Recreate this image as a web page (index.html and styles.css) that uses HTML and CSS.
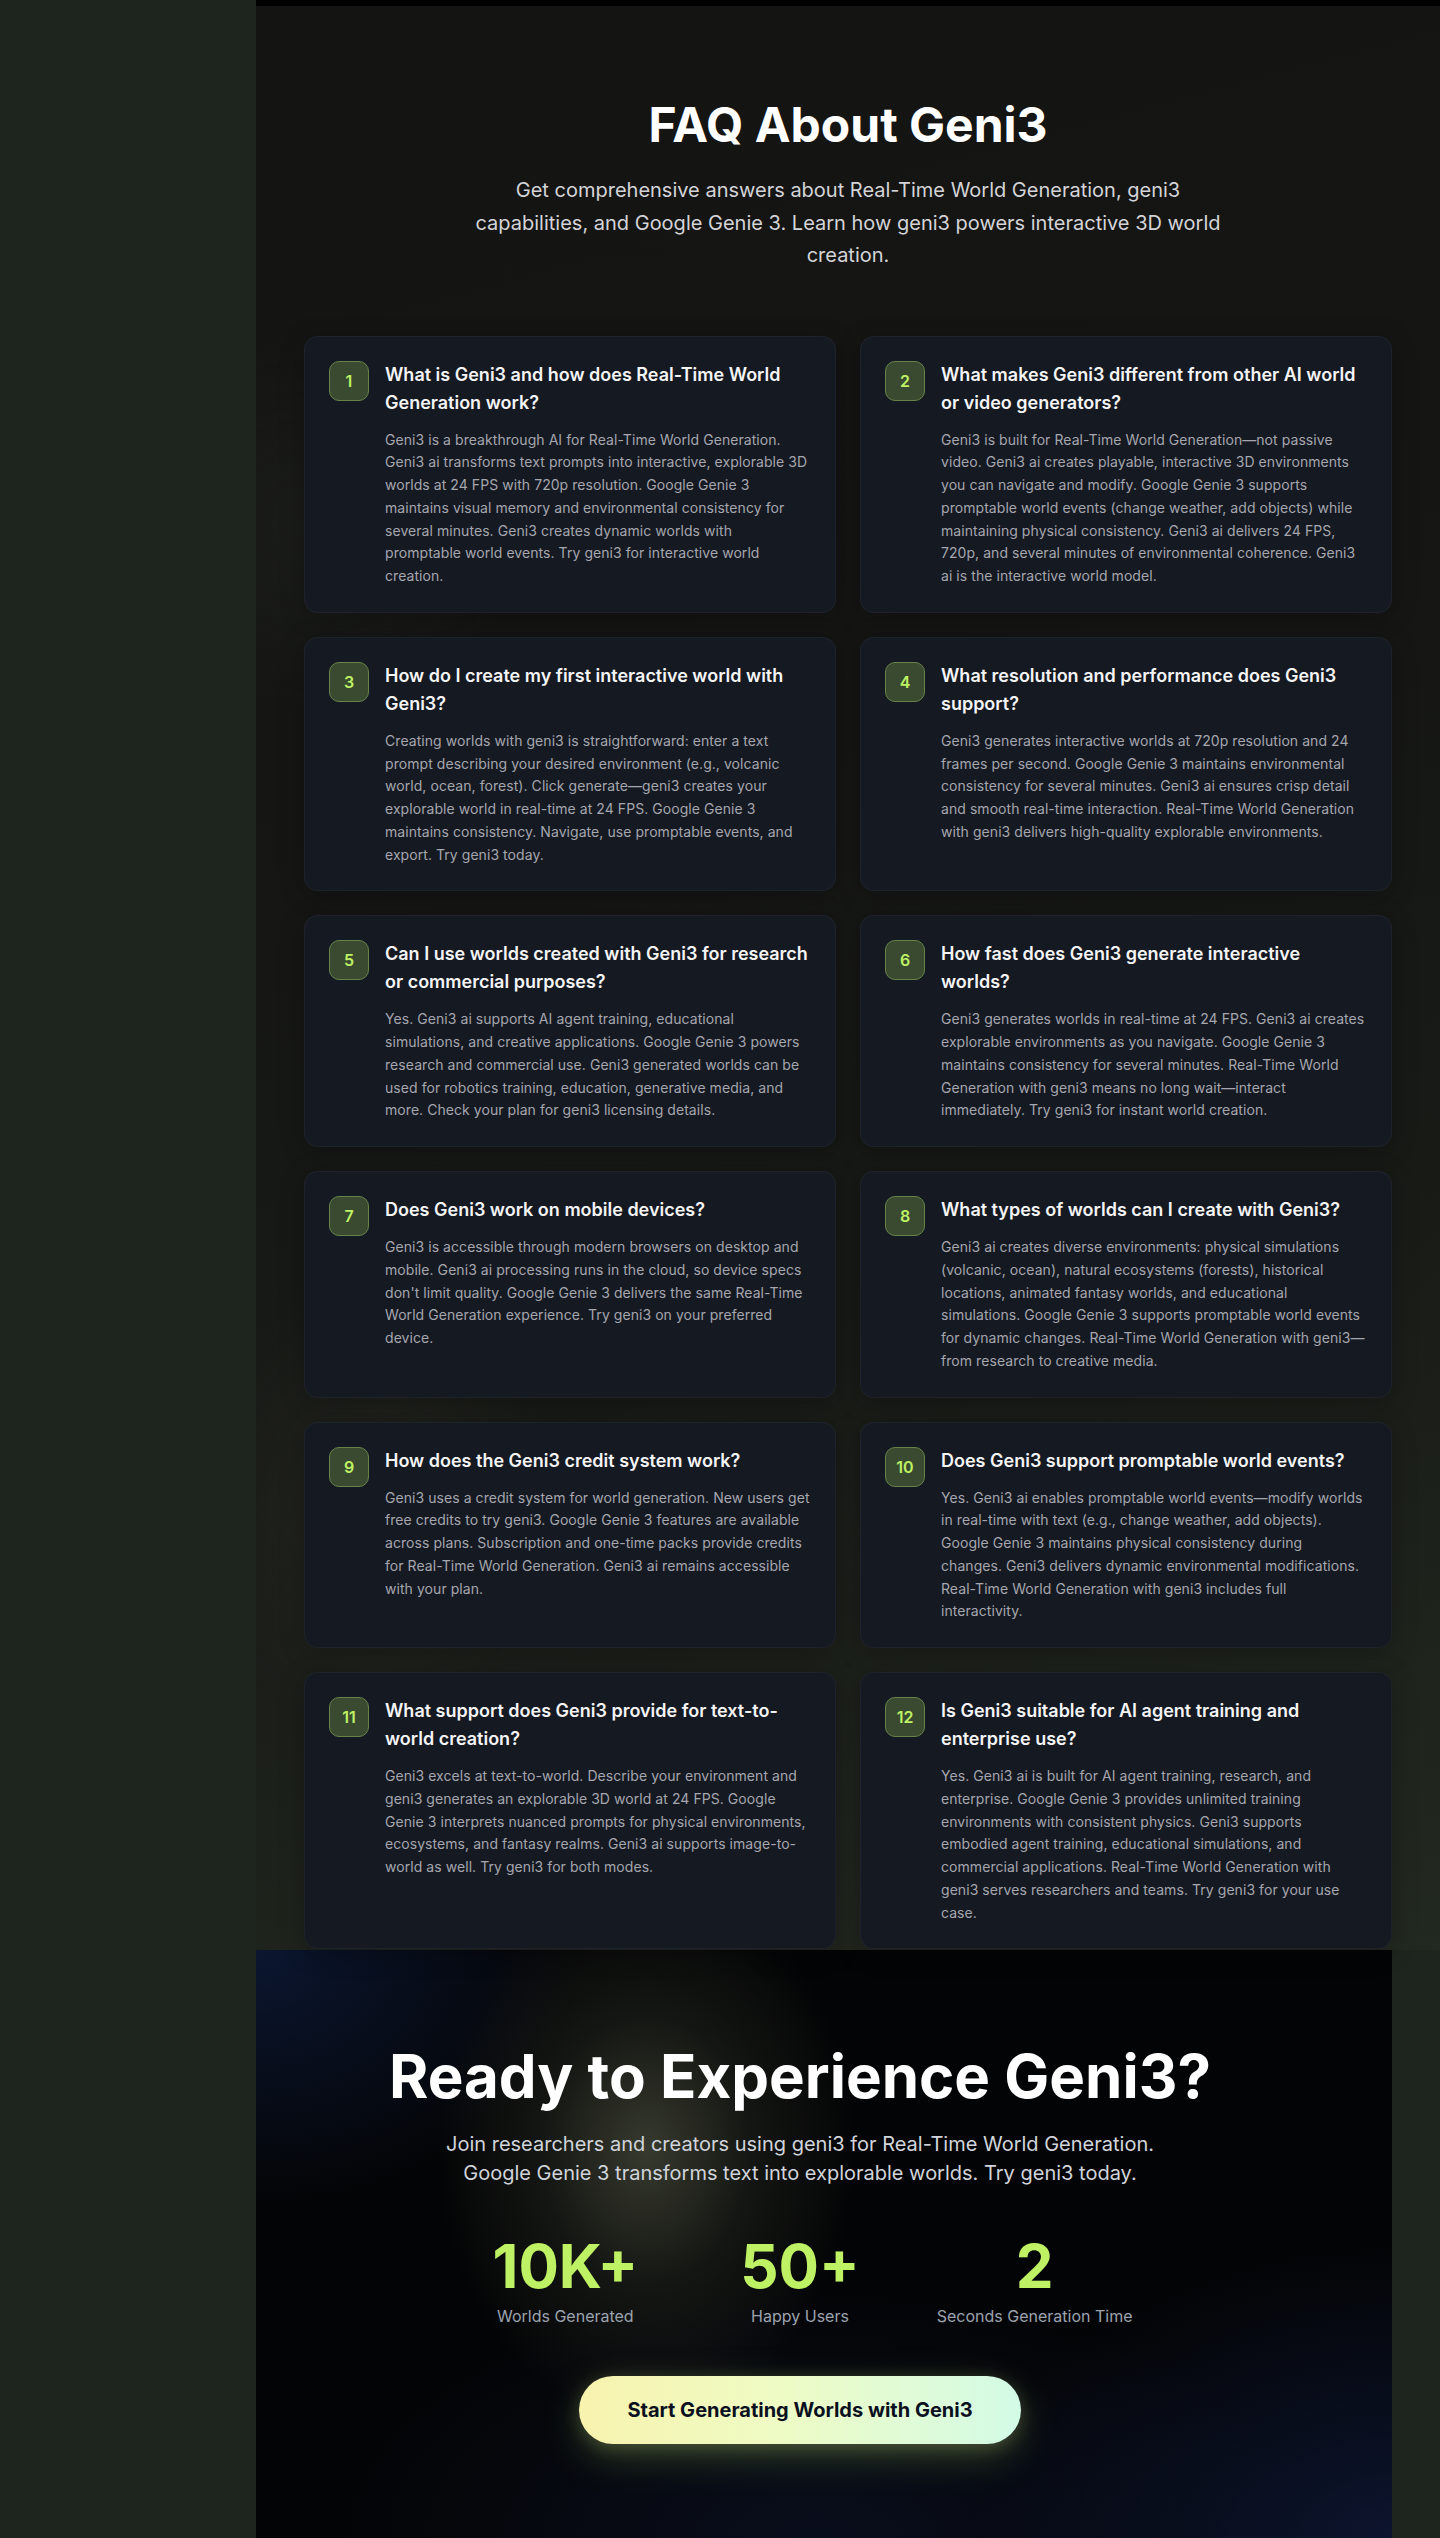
FILE: index.html
```html
<!DOCTYPE html>
<html lang="en">
<head>
<meta charset="utf-8">
<title>FAQ About Geni3</title>
<link rel="stylesheet" href="styles.css">
</head>
<body>
<div class="page">
  <section class="faq">
    <div class="faq-inner">
      <header class="faq-head">
        <h1 class="faq-title">FAQ About Geni3</h1>
        <p class="faq-sub">Get comprehensive answers about Real-Time World Generation, geni3 capabilities, and Google Genie 3. Learn how geni3 powers interactive 3D world creation.</p>
      </header>
      <div class="faq-grid">
        <article class="card">
          <div class="badge">1</div>
          <div class="card-body">
            <h3 class="q">What is Geni3 and how does Real-Time World Generation work?</h3>
            <p class="a">Geni3 is a breakthrough AI for Real-Time World Generation. Geni3 ai transforms text prompts into interactive, explorable 3D worlds at 24 FPS with 720p resolution. Google Genie 3 maintains visual memory and environmental consistency for several minutes. Geni3 creates dynamic worlds with promptable world events. Try geni3 for interactive world creation.</p>
          </div>
        </article>
        <article class="card">
          <div class="badge">2</div>
          <div class="card-body">
            <h3 class="q">What makes Geni3 different from other AI world or video generators?</h3>
            <p class="a">Geni3 is built for Real-Time World Generation—not passive video. Geni3 ai creates playable, interactive 3D environments you can navigate and modify. Google Genie 3 supports promptable world events (change weather, add objects) while maintaining physical consistency. Geni3 ai delivers 24 FPS, 720p, and several minutes of environmental coherence. Geni3 ai is the interactive world model.</p>
          </div>
        </article>
        <article class="card">
          <div class="badge">3</div>
          <div class="card-body">
            <h3 class="q">How do I create my first interactive world with Geni3?</h3>
            <p class="a">Creating worlds with geni3 is straightforward: enter a text prompt describing your desired environment (e.g., volcanic world, ocean, forest). Click generate—geni3 creates your explorable world in real-time at 24 FPS. Google Genie 3 maintains consistency. Navigate, use promptable events, and export. Try geni3 today.</p>
          </div>
        </article>
        <article class="card">
          <div class="badge">4</div>
          <div class="card-body">
            <h3 class="q">What resolution and performance does Geni3 support?</h3>
            <p class="a">Geni3 generates interactive worlds at 720p resolution and 24 frames per second. Google Genie 3 maintains environmental consistency for several minutes. Geni3 ai ensures crisp detail and smooth real-time interaction. Real-Time World Generation with geni3 delivers high-quality explorable environments.</p>
          </div>
        </article>
        <article class="card">
          <div class="badge">5</div>
          <div class="card-body">
            <h3 class="q">Can I use worlds created with Geni3 for research or commercial purposes?</h3>
            <p class="a">Yes. Geni3 ai supports AI agent training, educational simulations, and creative applications. Google Genie 3 powers research and commercial use. Geni3 generated worlds can be used for robotics training, education, generative media, and more. Check your plan for geni3 licensing details.</p>
          </div>
        </article>
        <article class="card">
          <div class="badge">6</div>
          <div class="card-body">
            <h3 class="q">How fast does Geni3 generate interactive worlds?</h3>
            <p class="a">Geni3 generates worlds in real-time at 24 FPS. Geni3 ai creates explorable environments as you navigate. Google Genie 3 maintains consistency for several minutes. Real-Time World Generation with geni3 means no long wait—interact immediately. Try geni3 for instant world creation.</p>
          </div>
        </article>
        <article class="card">
          <div class="badge">7</div>
          <div class="card-body">
            <h3 class="q">Does Geni3 work on mobile devices?</h3>
            <p class="a">Geni3 is accessible through modern browsers on desktop and mobile. Geni3 ai processing runs in the cloud, so device specs don't limit quality. Google Genie 3 delivers the same Real-Time World Generation experience. Try geni3 on your preferred device.</p>
          </div>
        </article>
        <article class="card">
          <div class="badge">8</div>
          <div class="card-body">
            <h3 class="q">What types of worlds can I create with Geni3?</h3>
            <p class="a">Geni3 ai creates diverse environments: physical simulations (volcanic, ocean), natural ecosystems (forests), historical locations, animated fantasy worlds, and educational simulations. Google Genie 3 supports promptable world events for dynamic changes. Real-Time World Generation with geni3—from research to creative media.</p>
          </div>
        </article>
        <article class="card">
          <div class="badge">9</div>
          <div class="card-body">
            <h3 class="q">How does the Geni3 credit system work?</h3>
            <p class="a">Geni3 uses a credit system for world generation. New users get free credits to try geni3. Google Genie 3 features are available across plans. Subscription and one-time packs provide credits for Real-Time World Generation. Geni3 ai remains accessible with your plan.</p>
          </div>
        </article>
        <article class="card">
          <div class="badge">10</div>
          <div class="card-body">
            <h3 class="q">Does Geni3 support promptable world events?</h3>
            <p class="a">Yes. Geni3 ai enables promptable world events—modify worlds in real-time with text (e.g., change weather, add objects). Google Genie 3 maintains physical consistency during changes. Geni3 delivers dynamic environmental modifications. Real-Time World Generation with geni3 includes full interactivity.</p>
          </div>
        </article>
        <article class="card">
          <div class="badge">11</div>
          <div class="card-body">
            <h3 class="q">What support does Geni3 provide for text-to-world creation?</h3>
            <p class="a">Geni3 excels at text-to-world. Describe your environment and geni3 generates an explorable 3D world at 24 FPS. Google Genie 3 interprets nuanced prompts for physical environments, ecosystems, and fantasy realms. Geni3 ai supports image-to-world as well. Try geni3 for both modes.</p>
          </div>
        </article>
        <article class="card">
          <div class="badge">12</div>
          <div class="card-body">
            <h3 class="q">Is Geni3 suitable for AI agent training and enterprise use?</h3>
            <p class="a">Yes. Geni3 ai is built for AI agent training, research, and enterprise. Google Genie 3 provides unlimited training environments with consistent physics. Geni3 supports embodied agent training, educational simulations, and commercial applications. Real-Time World Generation with geni3 serves researchers and teams. Try geni3 for your use case.</p>
          </div>
        </article>
      </div>
    </div>
  </section>

  <section class="cta">
    <div class="cta-inner">
      <h2 class="cta-title">Ready to Experience Geni3?</h2>
      <p class="cta-sub">Join researchers and creators using geni3 for Real-Time World Generation. Google Genie 3 transforms text into explorable worlds. Try geni3 today.</p>
      <div class="stats">
        <div class="stat">
          <div class="stat-num">10K+</div>
          <div class="stat-label">Worlds Generated</div>
        </div>
        <div class="stat">
          <div class="stat-num">50+</div>
          <div class="stat-label">Happy Users</div>
        </div>
        <div class="stat">
          <div class="stat-num">2</div>
          <div class="stat-label">Seconds Generation Time</div>
        </div>
      </div>
      <a class="cta-btn" href="#">Start Generating Worlds with Geni3</a>
    </div>
  </section>
</div>
</body>
</html>
```

FILE: styles.css
```css
* {
  box-sizing: border-box;
  margin: 0;
  padding: 0;
}

html,
body {
  background: #1e241e;
}

body {
  font-family: Inter, "Noto Sans", "Liberation Sans", sans-serif;
  color: #ffffff;
  min-height: 2538px;
  -webkit-font-smoothing: antialiased;
}

.page {
  margin-left: 256px;
}

/* ---------- FAQ ---------- */
.faq {
  width: 1184px;
  border-top: 6px solid #000000;
  padding: 90px 0 1px;
  background:
    radial-gradient(ellipse 260px 320px at 120px 1500px, rgba(60, 58, 48, 0.3), rgba(60, 58, 48, 0) 70%),
    radial-gradient(ellipse 300px 260px at 60px 520px, rgba(40, 44, 36, 0.3), rgba(40, 44, 36, 0) 70%),
    linear-gradient(165deg, #141413 0%, #151614 35%, #181a16 65%, #222920 100%);
}

.faq-inner {
  width: 1088px;
  margin: 0 auto;
}

.faq-head {
  display: flex;
  flex-direction: column;
  align-items: center;
  text-align: center;
  margin-bottom: 64px;
}

.faq-title {
  font-size: 48px;
  line-height: 58px;
  font-weight: 700;
  color: #ffffff;
}

.faq-sub {
  margin-top: 20px;
  max-width: 768px;
  font-size: 20px;
  line-height: 32.5px;
  color: #d4d4d8;
}

.faq-grid {
  display: grid;
  grid-template-columns: 1fr 1fr;
  gap: 24px;
}

.card {
  display: flex;
  gap: 16px;
  padding: 24px;
  background: #141922;
  border: 1px solid rgba(255, 255, 255, 0.045);
  border-radius: 14px;
  box-shadow: 0 4px 24px rgba(0, 0, 0, 0.25);
}

.badge {
  flex: none;
  width: 40px;
  height: 40px;
  border-radius: 10px;
  background: #3a4a30;
  border: 1px solid #66834a;
  color: #bef264;
  font-size: 16px;
  font-weight: 600;
  display: flex;
  align-items: center;
  justify-content: center;
}

.card-body {
  flex: 1;
  min-width: 0;
}

.q {
  font-size: 18px;
  line-height: 28px;
  font-weight: 600;
  color: #f4f4f5;
  margin-bottom: 12px;
}

.a {
  font-size: 14px;
  line-height: 22.75px;
  letter-spacing: 0.06px;
  color: #a6a6ae;
}

/* ---------- CTA ---------- */
.cta {
  width: 1136px;
  padding: 96px 0;
  background:
    radial-gradient(ellipse 210px 270px at 390px 200px, rgba(98, 102, 80, 0.55), rgba(72, 76, 60, 0.25) 50%, rgba(40, 42, 34, 0) 100%),
    radial-gradient(ellipse 320px 260px at 0px 0px, rgba(14, 28, 62, 0.75), rgba(14, 28, 62, 0) 100%),
    radial-gradient(ellipse 420px 300px at 1136px 589px, rgba(16, 26, 60, 0.75), rgba(16, 26, 60, 0) 100%),
    radial-gradient(ellipse 500px 260px at 560px 589px, rgba(12, 18, 38, 0.7), rgba(12, 18, 38, 0) 100%),
    #030405;
}

.cta-inner {
  width: 1088px;
  display: flex;
  flex-direction: column;
  align-items: center;
  text-align: center;
}

.cta-title {
  font-size: 60px;
  line-height: 60px;
  font-weight: 700;
  color: #ffffff;
  margin-bottom: 24px;
}

.cta-sub {
  max-width: 768px;
  font-size: 20px;
  line-height: 29px;
  color: #d1d5db;
  margin-bottom: 48px;
}

.stats {
  width: 672px;
  display: grid;
  grid-template-columns: repeat(3, 1fr);
  gap: 32px;
  margin-bottom: 48px;
}

.stat-num {
  font-size: 60px;
  line-height: 60px;
  font-weight: 700;
  color: #bef264;
}

.stat-label {
  margin-top: 8px;
  font-size: 16px;
  line-height: 24px;
  color: #9ca3af;
}

.cta-btn {
  display: inline-block;
  padding: 20px 48px;
  border-radius: 9999px;
  font-size: 20px;
  line-height: 28px;
  font-weight: 700;
  color: #0b1020;
  text-decoration: none;
  background: linear-gradient(90deg, #f8f3ae 0%, #eefbc4 45%, #d3fbe6 100%);
  box-shadow: 0 12px 40px rgba(190, 242, 100, 0.22), 0 4px 18px rgba(240, 245, 180, 0.18);
}
```
